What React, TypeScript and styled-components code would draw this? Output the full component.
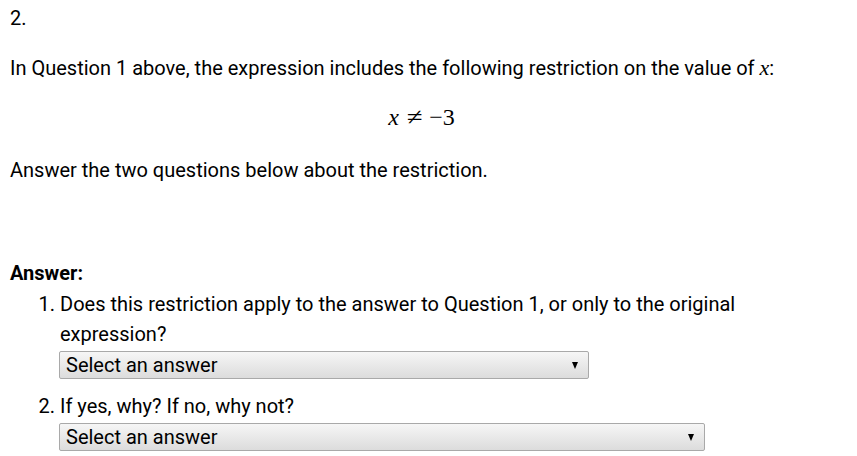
import React from "react";
import styled, { createGlobalStyle } from "styled-components";

const Global = createGlobalStyle`
  html, body { margin: 0; padding: 0; background: #fff; }
  body { font-family: Roboto, "Liberation Sans", sans-serif; color: #000; }
`;

const Page = styled.div`
  padding: 3px 30px 3px 10px;
  font-size: 20px;
  line-height: 30px;
`;

const Para = styled.p<{ $mt: number }>`
  margin: ${(p) => p.$mt}px 0 0 0;
`;

const MathLine = styled.div`
  margin-top: 19px;
  display: flex;
  justify-content: center;
  align-items: baseline;
  font-family: "Liberation Serif", "DejaVu Serif", serif;
  font-size: 24px;
  padding-left: 6px;
`;

const Var = styled.i<{ $size: number }>`
  font-family: "Liberation Serif", "DejaVu Serif", serif;
  font-size: ${(p) => p.$size}px;
`;

const Op = styled.span`
  margin: 0 8px 0 9px;
  display: inline-block;
  transform: scaleX(1.2);
`;

const AnswerLabel = styled.div`
  margin-top: 73px;
  font-weight: 700;
`;

const List = styled.ol`
  margin: 1px 0 0 0;
  padding-left: 50px;
`;

const Item = styled.li<{ $mt: number }>`
  margin-top: ${(p) => p.$mt}px;
  padding-left: 0;
`;

const Select = styled.div<{ $w: number }>`
  display: flex;
  align-items: center;
  justify-content: space-between;
  box-sizing: border-box;
  width: ${(p) => p.$w}px;
  height: 28px;
  margin: 2px 0 0 -1px;
  padding: 0 10px 0 6px;
  border: 1px solid #a9a9a9;
  border-radius: 2px;
  background: linear-gradient(#f6f6f6, #dcdcdc);
  line-height: 26px;
`;

const Arrow = styled.span`
  width: 0;
  height: 0;
  border-left: 3.5px solid transparent;
  border-right: 3.5px solid transparent;
  border-top: 7px solid #000;
`;

export default function App() {
  return (
    <>
      <Global />
      <Page>
        <div>2.</div>
        <Para $mt={20}>
          In Question 1 above, the expression includes the following restriction on the value of <Var $size={22}>x</Var>:
        </Para>
        <MathLine>
          <Var $size={24}>x</Var>
          <Op>≠</Op>
          <span>−3</span>
        </MathLine>
        <Para $mt={23}>Answer the two questions below about the restriction.</Para>
        <AnswerLabel>Answer:</AnswerLabel>
        <List>
          <Item $mt={0}>
            Does this restriction apply to the answer to Question 1, or only to the original expression?
            <Select $w={530}>
              Select an answer
              <Arrow />
            </Select>
          </Item>
          <Item $mt={12}>
            If yes, why? If no, why not?
            <Select $w={646}>
              Select an answer
              <Arrow />
            </Select>
          </Item>
        </List>
      </Page>
    </>
  );
}
